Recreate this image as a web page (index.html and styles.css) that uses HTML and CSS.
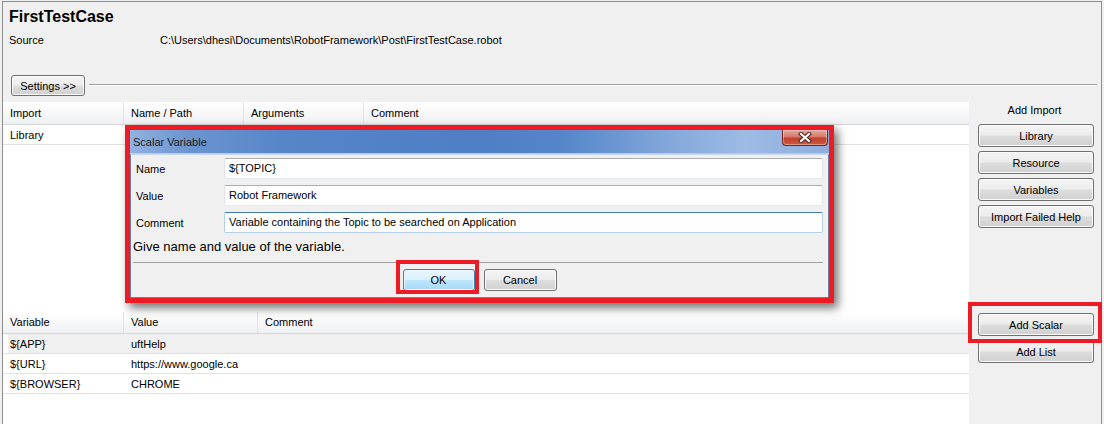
FILE: index.html
```html
<!DOCTYPE html>
<html>
<head>
<meta charset="utf-8">
<title>FirstTestCase</title>
<link rel="stylesheet" href="styles.css">
</head>
<body>
<div class="window">
  <div class="head">
    <h1 class="title">FirstTestCase</h1>
    <div class="source"><span class="src-label">Source</span><span class="src-path">C:\Users\dhesi\Documents\RobotFramework\Post\FirstTestCase.robot</span></div>
  </div>
  <div class="settings-row">
    <button class="btn settings">Settings &gt;&gt;</button>
    <div class="rule"></div>
  </div>
  <div class="main">
    <div class="tables">
      <div class="grid imports">
        <div class="ghead">
          <div class="gc w1">Import</div>
          <div class="gc w2">Name / Path</div>
          <div class="gc w3">Arguments</div>
          <div class="gc wrest">Comment</div>
        </div>
        <div class="grow">
          <div class="gc w1">Library</div>
          <div class="gc w2"></div>
          <div class="gc w3"></div>
          <div class="gc wrest"></div>
        </div>
      </div>
      <div class="grid vars">
        <div class="ghead short">
          <div class="gc w1">Variable</div>
          <div class="gc wv">Value</div>
          <div class="gc wrest">Comment</div>
        </div>
        <div class="grow sel">
          <div class="gc w1">${APP}</div>
          <div class="gc wv">uftHelp</div>
          <div class="gc wrest"></div>
        </div>
        <div class="grow">
          <div class="gc w1">${URL}</div>
          <div class="gc wv">https://www.google.ca</div>
          <div class="gc wrest"></div>
        </div>
        <div class="grow">
          <div class="gc w1">${BROWSER}</div>
          <div class="gc wv">CHROME</div>
          <div class="gc wrest"></div>
        </div>
      </div>
    </div>
    <div class="side">
      <div class="side-imp">
        <div class="side-label">Add Import</div>
        <button class="btn side-btn">Library</button>
        <button class="btn side-btn">Resource</button>
        <button class="btn side-btn">Variables</button>
        <button class="btn side-btn">Import Failed Help</button>
      </div>
      <div class="side-var">
        <button class="btn side-btn">Add Scalar</button>
        <button class="btn side-btn">Add List</button>
      </div>
    </div>
  </div>

  <div class="dialog">
    <div class="dtitle">Scalar Variable
      <div class="dclose">
        <svg width="14" height="11" viewBox="0 0 14 11">
          <path d="M3 2 L11 9 M11 2 L3 9" stroke="#4a2a26" stroke-width="4.2" stroke-linecap="square" fill="none"/>
          <path d="M3 2 L11 9 M11 2 L3 9" stroke="#ffffff" stroke-width="2.2" stroke-linecap="square" fill="none"/>
        </svg>
      </div>
    </div>
    <div class="dbody">
      <div class="form">
        <div class="flabel">Name</div>
        <div class="field">${TOPIC}</div>
        <div class="flabel">Value</div>
        <div class="field">Robot Framework</div>
        <div class="flabel">Comment</div>
        <div class="field focus">Variable containing the Topic to be searched on Application</div>
      </div>
      <div class="help">Give name and value of the variable.</div>
      <div class="dsep"></div>
      <div class="dbuttons">
        <button class="btn dbtn ok">OK</button>
        <button class="btn dbtn cancel">Cancel</button>
      </div>
    </div>
  </div>
  <div class="mark mark-ok"></div>
  <div class="mark mark-scalar"></div>
</div>
</body>
</html>
```

FILE: styles.css
```css
html, body {
  margin: 0;
  padding: 0;
  background: #f0f0f0;
}
body {
  font-family: "Liberation Sans", Arial, sans-serif;
  font-size: 11px;
  line-height: 16px;
  color: #000;
}
.window {
  position: relative;
  margin: 1px 2px 0 2px;
  border: 1px solid #8c8c8c;
  border-bottom: none;
  height: 422px;
  box-sizing: border-box;
  height: 423px;
  background: #f0f0f0;
  display: flex;
  flex-direction: column;
}
.head {
  padding: 5px 6px 0;
}
.title {
  margin: 0;
  font-family: "Liberation Sans", Arial, sans-serif;
  font-weight: bold;
  font-size: 16px;
  line-height: 20px;
  color: #000;
}
.source {
  display: flex;
  margin-top: 5px;
  line-height: 16px;
}
.src-label {
  width: 151px;
}
.settings-row {
  display: flex;
  align-items: flex-start;
  margin-top: 27px;
  padding-left: 8px;
}
.btn {
  font-family: "Liberation Sans", Arial, sans-serif;
  font-size: 11px;
  color: #000;
  padding: 0;
  border: 1px solid #707070;
  border-radius: 3px;
  background: linear-gradient(#f4f4f4 0%, #ececec 48%, #dddddd 52%, #d0d0d0 100%);
  box-shadow: inset 0 0 0 1px #fbfbfb;
  box-sizing: border-box;
}
.settings {
  width: 74px;
  height: 21px;
}
.rule {
  flex: 1;
  margin: 9px 4px 0 4px;
  border-top: 1px solid #a0a0a0;
  border-bottom: 1px solid #ffffff;
}
.main {
  display: flex;
  margin-top: 6px;
  flex: 1;
}
.tables {
  width: 966px;
  background: #fff;
  display: flex;
  flex-direction: column;
}
.imports {
  height: 210px;
}
.vars {
  flex: 1;
}
.ghead {
  display: flex;
  height: 22px;
  line-height: 22px;
  background: linear-gradient(#ffffff, #eff0f2);
  border-bottom: 1px solid #d5d5d5;
}
.ghead.short {
  height: 21px;
  line-height: 21px;
}
.ghead .gc {
  border-right: 1px solid #e3e3e3;
}
.ghead .gc.wrest {
  border-right: none;
}
.grow {
  display: flex;
  height: 19px;
  line-height: 20px;
  border-bottom: 1px solid #e2e2e2;
}
.grow.sel {
  background: linear-gradient(to right, #ffffff 5px, #f0f0f0 5px);
}
.gc {
  padding-left: 7px;
  box-sizing: border-box;
  white-space: nowrap;
  overflow: hidden;
}
.w1 { width: 121px; }
.w2 { width: 120px; }
.w3 { width: 120px; }
.wv { width: 134px; }
.wrest { flex: 1; }
.side {
  width: 131px;
  display: flex;
  flex-direction: column;
}
.side-imp {
  height: 210px;
  display: flex;
  flex-direction: column;
  gap: 4px;
}
.side-label {
  text-align: center;
  line-height: 16px;
  margin-bottom: 2px;
}
.side-btn {
  margin-left: 9px;
  width: 116px;
  height: 23px;
}
.side-var {
  padding-top: 1px;
  display: flex;
  flex-direction: column;
  gap: 4px;
}

/* Dialog overlay */
.dialog {
  position: absolute;
  left: 122px;
  top: 123px;
  width: 699px;
  height: 168px;
  border: 5px solid #ed1c24;
  background: #f0f0f0;
  box-shadow: 4px 5px 9px rgba(0, 0, 0, 0.55);
}
.dtitle {
  position: relative;
  height: 24px;
  line-height: 24px;
  padding-left: 3px;
  color: #1a1a1a;
  background: linear-gradient(90deg, #92b2e0 0%, #6d95d0 8%, #5685c8 22%, #4e7fc4 50%, #5586c9 62%, #86a9dc 78%, #9dbbe4 88%, #8dadde 100%);
  border-bottom: 1px solid #b9cde9;
  box-sizing: border-box;
}
.dclose {
  position: absolute;
  top: 0;
  right: 1px;
  width: 46px;
  height: 16px;
  box-sizing: border-box;
  border: 1px solid #6e2a22;
  border-top: none;
  border-radius: 0 0 4px 4px;
  background: linear-gradient(#e8a89c 0%, #d47a6a 45%, #c0412e 55%, #cf5a40 100%);
  display: flex;
  align-items: center;
  justify-content: center;
  box-shadow: inset 0 0 0 1px rgba(255, 255, 255, 0.35);
}
.dclose svg {
  display: block;
}
.dbody {
  height: 144px;
  box-sizing: border-box;
  border: 1px solid #6a80a0;
  border-top-color: #c9d6e8;
  padding: 3px 5px 0 5px;
}
.form {
  display: grid;
  grid-template-columns: 88px 1fr;
  row-gap: 6px;
  align-items: center;
}
.flabel {
  line-height: 16px;
}
.field {
  height: 21px;
  box-sizing: border-box;
  background: #fff;
  border: 1px solid #e2e3ea;
  border-top-color: #abadb3;
  border-bottom-color: #e3e9ef;
  border-radius: 2px;
  line-height: 19px;
  padding-left: 4px;
}
.field.focus {
  border-color: #b5cfe7;
  border-top-color: #3d7bad;
}
.help {
  margin-top: 6px;
  margin-left: -3px;
  font-size: 13px;
  line-height: 16px;
}
.dsep {
  margin-top: 7px;
  margin-left: -3px;
  border-top: 1px solid #a0a0a0;
}
.dbuttons {
  margin-top: 6px;
  display: flex;
  justify-content: center;
  gap: 9px;
}
.dbtn {
  height: 22px;
}
.ok {
  width: 72px;
  border-color: #3c7fb1;
  background: linear-gradient(#eaf6fd 0%, #d9f0fc 48%, #bee6fd 52%, #a7d9f5 100%);
  box-shadow: inset 0 0 0 1px #e8f5fc;
}
.cancel {
  width: 73px;
}

/* Annotation boxes */
.mark {
  position: absolute;
  border: 4px solid #ed1c24;
  box-sizing: border-box;
}
.mark-ok {
  left: 393px;
  top: 258px;
  width: 83px;
  height: 34px;
}
.mark-scalar {
  left: 965px;
  top: 300px;
  width: 134px;
  height: 41px;
}
```
